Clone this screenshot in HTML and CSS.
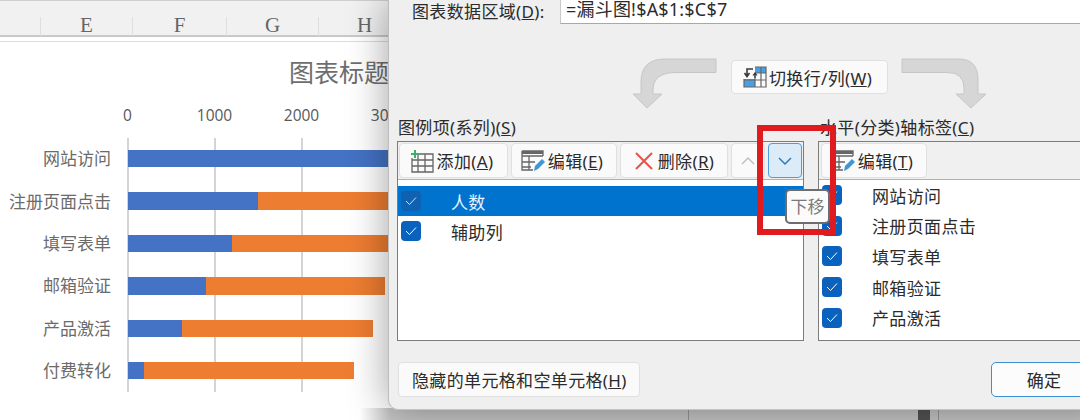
FILE: index.html
```html
<!DOCTYPE html>
<html lang="zh-CN">
<head>
<meta charset="utf-8">
<title>选择数据源</title>
<link rel="stylesheet" href="styles.css">
</head>
<body>
<main class="stage">
  <section class="sheet">
    <div class="colheads">
      <span class="col">E</span><span class="col col-f">F</span><span class="col">G</span><span class="col">H</span>
    </div>
    <div class="chart">
      <h2 class="chart-title">图表标题</h2>
      <div class="axis"><span>0</span><span>1000</span><span>2000</span><span>3000</span></div>
      <div class="plot">
        <div class="row"><span class="cat">网站访问</span><div class="track"><i class="blue b1"></i></div></div>
        <div class="row"><span class="cat">注册页面点击</span><div class="track"><i class="blue b2"></i><i class="orange o2"></i></div></div>
        <div class="row"><span class="cat">填写表单</span><div class="track"><i class="blue b3"></i><i class="orange o3"></i></div></div>
        <div class="row"><span class="cat">邮箱验证</span><div class="track"><i class="blue b4"></i><i class="orange o4"></i></div></div>
        <div class="row"><span class="cat">产品激活</span><div class="track"><i class="blue b5"></i><i class="orange o5"></i></div></div>
        <div class="row"><span class="cat">付费转化</span><div class="track"><i class="blue b6"></i><i class="orange o6"></i></div></div>
      </div>
    </div>
  </section>

  <div class="under"><i class="under-line l1"></i><i class="under-thumb"></i><i class="under-line l2"></i></div>

  <section class="dialog">
    <div class="range">
      <label class="range-label">图表数据区域(<u>D</u>):</label>
      <div class="range-input">=漏斗图!$A$1:$C$7</div>
    </div>

    <div class="swap">
      <svg class="arrow" width="86" height="52" viewBox="0 0 86 52"><path d="M84 1V14.500H44Q21 14.500 21 32V36H30L15 50 1 36H9V24Q9 1 33 1Z" fill="#d6d6d6" stroke="#c6c6c6"/></svg>
      <button class="btn btn-swap">
        <svg width="24" height="22" viewBox="0 0 24 22"><rect x="12" y="1" width="11" height="6" fill="#4a9fe0"/><rect x="1" y="13" width="11" height="8" fill="#4a9fe0"/><path d="M12 1H23V21H1V13M12 7H23M1 14H23M12 7V21M18 1V21" fill="none" stroke="#666" stroke-width="1.200"/><path d="M10 3H4V9M1.500 7L4 10.500 6.500 7" fill="none" stroke="#3a3a3a" stroke-width="1.600"/><path d="M12 12V8M10 9.500L12 7 14 9.500" fill="none" stroke="#3a3a3a" stroke-width="1.200"/></svg>
        <span>切换行/列(<u>W</u>)</span>
      </button>
      <svg class="arrow" width="86" height="52" viewBox="0 0 86 52"><path d="M1 1V14.500H46Q63 14.500 63 30V36H55L70 50 85 36H77V22Q77 1 58 1Z" fill="#d6d6d6" stroke="#c6c6c6"/></svg>
    </div>

    <div class="panels">
      <div class="panel-col">
        <div class="panel-label">图例项(系列)(<u>S</u>)</div>
        <div class="panel">
          <div class="toolbar">
            <button class="btn tool tool-add">
              <svg width="24" height="24" viewBox="0 0 24 24"><path d="M8 5H23V23H2V9M2 11H23M2 17H23M8 5V23M15 5V23" fill="none" stroke="#666" stroke-width="1.300"/><path d="M5 1V9M1 5H9" stroke="#3fae6a" stroke-width="2"/></svg>
              <span>添加(<u>A</u>)</span>
            </button>
            <button class="btn tool tool-edit">
              <svg width="24" height="24" viewBox="0 0 24 24"><path d="M1 2H22V7M1 2V21H12M1 7H22M1 13H14M1 18H10M8 7V21" fill="none" stroke="#666" stroke-width="1.300"/><path d="M1 2H22V5H1Z" fill="#666"/><path d="M13 22L14 17 21 10 24 13 17 20Z" fill="#3f97d8"/></svg>
              <span>编辑(<u>E</u>)</span>
            </button>
            <button class="btn tool tool-del">
              <svg width="20" height="20" viewBox="0 0 20 20"><path d="M2 2L18 18M18 2L2 18" stroke="#e5534b" stroke-width="2"/></svg>
              <span>删除(<u>R</u>)</span>
            </button>
            <button class="btn tool tool-sq">
              <svg width="16" height="10" viewBox="0 0 16 10"><path d="M2 8L8 2 14 8" fill="none" stroke="#c0c0c0" stroke-width="1.500"/></svg>
            </button>
            <button class="btn tool tool-sq tool-on">
              <svg width="16" height="10" viewBox="0 0 16 10"><path d="M2 2L8 8 14 2" fill="none" stroke="#2b7cbd" stroke-width="1.500"/></svg>
            </button>
          </div>
          <ul class="list list-series">
            <li class="item selected"><span class="check check-dim"><svg width="12" height="10" viewBox="0 0 12 10"><path d="M1 5L4.500 8.500 11 1.500" fill="none" stroke="#cfe3f7" stroke-width="1"/></svg></span>人数</li>
            <li class="item"><span class="check"><svg width="12" height="10" viewBox="0 0 12 10"><path d="M1 5L4.500 8.500 11 1.500" fill="none" stroke="#fff" stroke-width="1"/></svg></span>辅助列</li>
          </ul>
        </div>
      </div>

      <div class="panel-col panel-col-right">
        <div class="panel-label">水平(分类)轴标签(<u>C</u>)</div>
        <div class="panel">
          <div class="toolbar toolbar-axis">
            <button class="btn tool tool-edit">
              <svg width="24" height="24" viewBox="0 0 24 24"><path d="M1 2H22V7M1 2V21H12M1 7H22M1 13H14M1 18H10M8 7V21" fill="none" stroke="#666" stroke-width="1.300"/><path d="M1 2H22V5H1Z" fill="#666"/><path d="M13 22L14 17 21 10 24 13 17 20Z" fill="#3f97d8"/></svg>
              <span>编辑(<u>T</u>)</span>
            </button>
          </div>
          <ul class="list list-cats">
            <li class="item"><span class="check"><svg width="12" height="10" viewBox="0 0 12 10"><path d="M1 5L4.500 8.500 11 1.500" fill="none" stroke="#fff" stroke-width="1"/></svg></span>网站访问</li>
            <li class="item"><span class="check"><svg width="12" height="10" viewBox="0 0 12 10"><path d="M1 5L4.500 8.500 11 1.500" fill="none" stroke="#fff" stroke-width="1"/></svg></span>注册页面点击</li>
            <li class="item"><span class="check"><svg width="12" height="10" viewBox="0 0 12 10"><path d="M1 5L4.500 8.500 11 1.500" fill="none" stroke="#fff" stroke-width="1"/></svg></span>填写表单</li>
            <li class="item"><span class="check"><svg width="12" height="10" viewBox="0 0 12 10"><path d="M1 5L4.500 8.500 11 1.500" fill="none" stroke="#fff" stroke-width="1"/></svg></span>邮箱验证</li>
            <li class="item"><span class="check"><svg width="12" height="10" viewBox="0 0 12 10"><path d="M1 5L4.500 8.500 11 1.500" fill="none" stroke="#fff" stroke-width="1"/></svg></span>产品激活</li>
          </ul>
        </div>
      </div>
    </div>

    <div class="footer">
      <button class="btn btn-hidden"><span>隐藏的单元格和空单元格(<u>H</u>)</span></button>
      <button class="btn btn-ok">确定</button>
    </div>
  </section>

  <div class="redbox"></div>
  <div class="tooltip">下移</div>
</main>
</body>
</html>
```

FILE: styles.css
```css
* { box-sizing: border-box; }
html, body { margin: 0; padding: 0; }
body {
  width: 1080px;
  height: 420px;
  overflow: hidden;
  background: #fff;
  font-family: "Noto Sans", "Noto Sans CJK SC", sans-serif;
  color: #333;
}
.stage { position: relative; width: 1080px; height: 420px; overflow: hidden; }

/* spreadsheet behind the dialog */
.sheet { width: 388px; overflow: hidden; }
.colheads {
  display: flex;
  height: 42px;
  padding-left: 40px;
  background: #f1f1f1;
  border-top: 1px solid #cfcfcf;
  border-bottom: 1px solid #dcdcdc;
  box-shadow: inset 0 -4px 0 #fff, inset 0 -6px 0 #c9c9c9;
  align-items: flex-start;
}
.col {
  flex: none;
  width: 92px;
  height: 19px;
  margin-top: 16px;
  text-align: center;
  font: 21px/16px "Liberation Serif", serif;
  color: #666;
  border-left: 1px solid #dedede;
}
.col-f { width: 94px; }
.chart { padding-top: 10px; }
.chart-title {
  margin: 0;
  padding-left: 289px;
  font-size: 25px;
  line-height: 40px;
  font-weight: 400;
  color: #6e6e6e;
  white-space: nowrap;
}
.axis {
  display: grid;
  grid-template-columns: repeat(4, 87px);
  margin: 11px 0 0 84px;
  height: 24px;
  font: 15.500px/24px "Open Sans", sans-serif;
  color: #595959;
  text-align: center;
}
.plot {
  margin-top: 11px;
  height: 254px;
  padding-top: 12px;
  display: flex;
  flex-direction: column;
  gap: 25px;
  background:
    linear-gradient(#d4d4d4, #d4d4d4) 127px 0 / 2px 100% no-repeat,
    linear-gradient(#d4d4d4, #d4d4d4) 214px 0 / 2px 100% no-repeat,
    linear-gradient(#d4d4d4, #d4d4d4) 301px 0 / 2px 100% no-repeat;
}
.row { display: flex; height: 17.400px; align-items: center; }
.cat {
  flex: none;
  width: 128px;
  padding-right: 17px;
  text-align: right;
  font-size: 17px;
  line-height: 17px;
  color: #6b6b6b;
  white-space: nowrap;
}
.track { flex: none; display: flex; height: 17.400px; }
.track i { display: block; height: 100%; }
.blue { background: #4472c4; }
.orange { background: #ed7d31; }
.b1 { width: 262px; }
.b2 { width: 130px; } .o2 { width: 132px; }
.b3 { width: 104px; } .o3 { width: 158px; }
.b4 { width: 78px; }  .o4 { width: 179px; }
.b5 { width: 54px; }  .o5 { width: 191px; }
.b6 { width: 16px; }  .o6 { width: 210px; }

/* what shows below the dialog */
.under {
  position: absolute;
  left: 340px;
  right: 0;
  top: 408px;
  height: 12px;
  background: linear-gradient(to right, rgba(200, 200, 200, 0) 20px, #c6c6c6 50px);
}
.under-thumb { position: absolute; left: 578px; top: 0; width: 12px; height: 12px; background: #545454; }
.under-line { position: absolute; top: 0; width: 1px; height: 12px; background: #979797; }
.l1 { left: 348px; }
.l2 { left: 598px; }

/* dialog window */
.dialog {
  position: absolute;
  left: 388px;
  top: 0;
  width: 720px;
  height: 410px;
  padding: 0 0 0 8px;
  background: #efefef;
  border-left: 1px solid #bdbdbd;
  border-bottom: 1px solid #c4c4c4;
  border-radius: 0 0 0 10px;
  box-shadow: 0 0 40px rgba(0, 0, 0, .38);
  font-size: 17px;
  letter-spacing: .35px;
  color: #2b2b2b;
}
.range { display: flex; height: 24px; padding-left: 15px; }
.range-label { width: 148px; line-height: 23px; white-space: nowrap; }
.range-input {
  flex: 1;
  height: 24px;
  padding-left: 5px;
  font-size: 18px;
  letter-spacing: .2px;
  line-height: 19px;
  background: #fff;
  border: 1px solid #c9c9c9;
  border-top: 0;
  border-bottom-color: #a8a8a8;
}
.swap {
  display: flex;
  align-items: flex-start;
  gap: 13px;
  height: 58px;
  margin-top: 34px;
  padding-left: 235px;
}
.arrow { flex: none; }
.btn {
  font: inherit;
  letter-spacing: inherit;
  color: inherit;
  background: #fafafa;
  border: 1px solid #e0e0e0;
  border-radius: 4px;
  padding: 0;
  display: flex;
  align-items: center;
  white-space: nowrap;
}
.btn-swap { width: 157px; height: 34px; margin-top: 2px; padding-left: 11px; gap: 2px; }

.panels { display: flex; gap: 14px; }
.panel-col { flex: none; width: 407px; }
.panel-col-right { width: 300px; }
.panel-label { height: 25px; line-height: 23px; margin-left: 1px; white-space: nowrap; }
.panel-col-right .panel-label { margin-left: 2px; }
.panel {
  height: 200px;
  background: #fff;
  border: 1px solid #7c7c7c;
}
.toolbar {
  display: flex;
  gap: 3px;
  height: 38px;
  padding: 1px 1px 0;
  background: #f0f0f0;
  border-bottom: 1px solid #b0b0b0;
}
.toolbar-axis { padding-left: 2px; }
.tool { height: 35px; justify-content: center; gap: 3px; }
.tool-add { width: 109px; padding-right: 4px; }
.tool-edit { width: 106px; padding-right: 4px; }
.tool-del { width: 108px; gap: 4px; }
.tool-sq { width: 34px; }
.tool-on { background: #dcebf8; border-color: #4c9de0; }
.list { list-style: none; margin: 0; padding: 0; }
.list-series { padding-top: 6px; }
.list-series .item { height: 30px; }
.item {
  display: flex;
  align-items: center;
  height: 30.600px;
  padding-left: 3px;
}
.selected { background: #0073cf; color: #eaf4fd; }
.check {
  flex: none;
  width: 20px;
  height: 20px;
  margin-right: 30px;
  border-radius: 4px;
  background: #0a62bd;
  display: flex;
  align-items: center;
  justify-content: center;
}
.check-dim { background: #0f62b2; }

.footer {
  display: flex;
  justify-content: space-between;
  margin-top: 21px;
  padding-right: 11px;
}
.btn-hidden { width: 242px; height: 35px; padding-left: 13px; margin-left: 1px; }
.btn-ok {
  width: 106px;
  height: 35px;
  justify-content: center;
  background: #fcfcfc;
  border-color: #3d8fd1;
  border-radius: 5px;
}

/* annotation on top */
.redbox {
  position: absolute;
  left: 757px;
  top: 125px;
  width: 79px;
  height: 110px;
  border: 6px solid #e01b1f;
}
.tooltip {
  position: absolute;
  left: 785px;
  top: 189px;
  width: 45px;
  height: 35px;
  border: 2px solid #6d6d6d;
  border-radius: 5px;
  background: #fbfbfb;
  color: #7a7a7a;
  font-size: 17px;
  line-height: 31px;
  text-align: center;
  white-space: nowrap;
}
```
